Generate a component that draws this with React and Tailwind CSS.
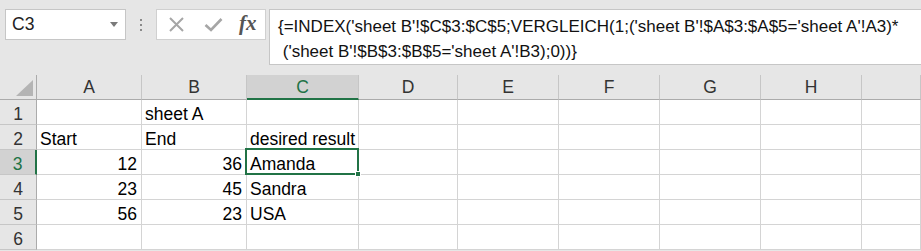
// Excel-style formula bar and sheet grid (sheet A)
import React from "react";

const COLS = [
  { key: "A", w: "w-[105px]" },
  { key: "B", w: "w-[105px]" },
  { key: "C", w: "w-[112px]" },
  { key: "D", w: "w-[99px]" },
  { key: "E", w: "w-[101px]" },
  { key: "F", w: "w-[101px]" },
  { key: "G", w: "w-[101px]" },
  { key: "H", w: "w-[101px]" },
  { key: "I", w: "flex-1" },
];

const DATA = {
  1: { B: { v: "sheet A" } },
  2: { A: { v: "Start" }, B: { v: "End" }, C: { v: "desired result" } },
  3: { A: { v: "12", num: true }, B: { v: "36", num: true }, C: { v: "Amanda" } },
  4: { A: { v: "23", num: true }, B: { v: "45", num: true }, C: { v: "Sandra" } },
  5: { A: { v: "56", num: true }, B: { v: "23", num: true }, C: { v: "USA" } },
  6: {},
};

const ACTIVE_COL = "C";
const ACTIVE_ROW = 3;

export default function App() {
  return (
    <div
      className="w-[921px] h-[251px] overflow-hidden bg-[#e6e6e6] text-black"
      style={{ fontFamily: '"Liberation Sans", Arial, sans-serif' }}
    >
      <FormulaBar />
      <Sheet />
    </div>
  );
}

function FormulaBar() {
  return (
    <div className="flex items-start pt-[9px] h-[75px]">
      {/* name box */}
      <div className="ml-[5px] w-[121px] h-[31px] bg-white border border-[#c6c6c6] flex items-center justify-between pl-[6px] pr-[7px]">
        <span className="text-[17.5px] leading-none text-[#222]">C3</span>
        <svg width="8" height="5" viewBox="0 0 8 5">
          <path d="M0 0 L8 0 L4 5 Z" fill="#7a7a7a" />
        </svg>
      </div>

      {/* grip dots */}
      <div className="w-[30px] h-[31px] flex flex-col items-center justify-center gap-[3px]">
        <span className="w-[2px] h-[2px] bg-[#8a8a8a]" />
        <span className="w-[2px] h-[2px] bg-[#8a8a8a]" />
        <span className="w-[2px] h-[2px] bg-[#8a8a8a]" />
      </div>

      {/* cancel / enter / fx */}
      <div className="w-[110px] h-[31px] bg-white border border-[#d0d0d0] flex items-center pl-[11px]">
        <svg width="17" height="17" viewBox="0 0 17 17">
          <path d="M2 2 L15 15 M15 2 L2 15" stroke="#a6a6a6" strokeWidth="2" />
        </svg>
        <svg width="19" height="15" viewBox="0 0 19 15" className="ml-[19px]">
          <path d="M1.5 8 L7 13 L17.5 2" stroke="#a6a6a6" strokeWidth="2.6" fill="none" />
        </svg>
        <span
          className="ml-[16px] text-[21px] leading-none italic font-bold text-[#555] -mt-[3px]"
          style={{ fontFamily: '"Liberation Serif", "Times New Roman", serif' }}
        >
          fx
        </span>
      </div>

      {/* formula text */}
      <div className="ml-[3px] flex-1 h-[56px] bg-white border-y border-l border-[#c6c6c6] pl-[8px] pt-[4px] text-[17px] leading-[25px] text-[#111] whitespace-pre">
        <div>{"{=INDEX('sheet B'!$C$3:$C$5;VERGLEICH(1;('sheet B'!$A$3:$A$5='sheet A'!A3)*"}</div>
        <div>{" ('sheet B'!$B$3:$B$5='sheet A'!B3);0))}"}</div>
      </div>
    </div>
  );
}

function Sheet() {
  return (
    <div className="relative bg-white">
      {/* column header row */}
      <div className="flex h-[25px] bg-[#e6e6e6]">
        <div className="w-[37px] h-full border-r border-b border-[#ababab] flex items-end justify-end pr-[3px] pb-[3px]">
          <svg width="17" height="16" viewBox="0 0 17 16">
            <path d="M17 0 L17 16 L0 16 Z" fill="#b4b4b4" />
          </svg>
        </div>
        {COLS.map((c) =>
          c.key === ACTIVE_COL ? (
            <div
              key={c.key}
              className={`${c.w} h-full bg-[#d2d2d2] border-r border-[#c6c6c6] border-b-2 border-b-[#217346] flex items-center justify-center text-[17.5px] text-[#217346] pt-[1px]`}
            >
              {c.key}
            </div>
          ) : (
            <div
              key={c.key}
              className={`${c.w} h-full border-r border-[#c6c6c6] border-b border-b-[#ababab] flex items-center justify-center text-[17.5px] text-[#333] pt-[1px]`}
            >
              {c.key === "I" ? "" : c.key}
            </div>
          )
        )}
      </div>

      {/* rows */}
      {Object.keys(DATA).map((r) => {
        const row = Number(r);
        const active = row === ACTIVE_ROW;
        return (
          <div key={r} className="flex h-[25px]">
            <div
              className={
                active
                  ? "w-[37px] h-full bg-[#d2d2d2] border-r-2 border-r-[#217346] border-b border-b-[#c6c6c6] flex items-end justify-center text-[17.5px] leading-[20px] text-[#217346]"
                  : "w-[37px] h-full bg-[#e6e6e6] border-r border-r-[#ababab] border-b border-b-[#c6c6c6] flex items-end justify-center text-[17.5px] leading-[20px] text-[#333]"
              }
            >
              {row}
            </div>
            {COLS.map((c) => {
              const cell = DATA[row][c.key];
              return (
                <div
                  key={c.key}
                  className={`${c.w} h-full border-r border-b border-[#d4d4d4] flex items-end text-[17.5px] leading-[20px] whitespace-nowrap ${
                    cell && cell.num ? "justify-end pr-[4px]" : "justify-start pl-[3px]"
                  }`}
                >
                  {cell ? cell.v : ""}
                </div>
              );
            })}
          </div>
        );
      })}

      {/* active cell selection */}
      <div className="absolute left-[245px] top-[73px] w-[114px] h-[27px] border-2 border-[#217346] pointer-events-none">
        <div className="absolute -right-[4px] -bottom-[4px] w-[6px] h-[6px] bg-[#217346] border border-white" />
      </div>
    </div>
  );
}
